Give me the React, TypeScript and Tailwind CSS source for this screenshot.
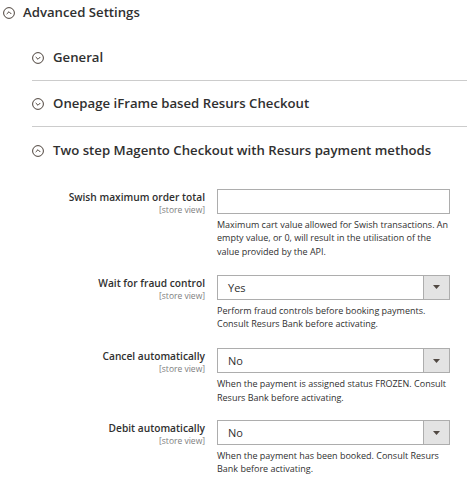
import React from "react";

function CircleChevron({ up, size = 12 }: { up?: boolean; size?: number }) {
  return (
    <svg width={size} height={size} viewBox="0 0 14 14" className="shrink-0">
      <circle cx="7" cy="7" r="6.3" fill="none" stroke="#41362f" strokeWidth="1.1" />
      {up ? (
        <path d="M4.3 8.2 L7 5.5 L9.7 8.2" fill="none" stroke="#41362f" strokeWidth="1.1" />
      ) : (
        <path d="M4.3 5.8 L7 8.5 L9.7 5.8" fill="none" stroke="#41362f" strokeWidth="1.1" />
      )}
    </svg>
  );
}

function Label({ text }: { text: string }) {
  return (
    <div className="w-[174px] shrink-0 pt-[1px] pr-[1px] text-right">
      <div className="text-[10.2px] leading-[14px] font-semibold text-[#303030]">{text}</div>
      <div className="text-[8.5px] leading-[11px] text-[#808080]">[store view]</div>
    </div>
  );
}

function Select({ value }: { value: string }) {
  return (
    <div className="flex h-[25px] w-[233px] border border-[#adadad] bg-white">
      <div className="flex-1 pl-[10px] text-[11px] leading-[23px] text-[#303030]">{value}</div>
      <div className="flex w-[26px] items-center justify-center border-l border-[#adadad] bg-[#e3e3e3]">
        <svg width="7" height="4" viewBox="0 0 7 4">
          <path d="M0 0 L7 0 L3.5 4 Z" fill="#514943" />
        </svg>
      </div>
    </div>
  );
}

function Help({ children }: { children: React.ReactNode }) {
  return (
    <div className="mt-[4px] w-[233px] text-[9px] leading-[13.3px] text-[#303030]">{children}</div>
  );
}

export default function App() {
  return (
    <div
      className="h-[488px] w-[467px] overflow-hidden bg-white text-[#303030]"
      style={{ fontFamily: '"Open Sans", sans-serif' }}
    >
      <div className="flex h-[25px] items-center gap-[8px] pl-[3px]">
        <CircleChevron up />
        <span className="text-[13.2px] font-semibold">Advanced Settings</span>
      </div>
      <div className="mt-[10px] pl-[32px]">
        <div className="flex h-[46px] items-center gap-[9px] border-b border-[#cccccc]">
          <CircleChevron />
          <span className="text-[13.2px] font-semibold">General</span>
        </div>
        <div className="flex h-[46px] items-center gap-[9px] border-b border-[#cccccc]">
          <CircleChevron />
          <span className="text-[13.2px] font-semibold">Onepage iFrame based Resurs Checkout</span>
        </div>
        <div className="flex h-[48px] items-center gap-[9px]">
          <CircleChevron up />
          <span className="text-[13.2px] font-semibold">
            Two step Magento Checkout with Resurs payment methods
          </span>
        </div>

        <div className="mt-[14px] flex flex-col">
          <div className="flex gap-[11px]">
            <Label text="Swish maximum order total" />
            <div>
              <div className="h-[25px] w-[233px] border border-[#adadad] bg-white" />
              <Help>
                Maximum cart value allowed for Swish transactions. An empty value, or 0, will
                result in the utilisation of the value provided by the API.
              </Help>
            </div>
          </div>
          <div className="mt-[17px] flex gap-[11px]">
            <Label text="Wait for fraud control" />
            <div>
              <Select value="Yes" />
              <Help>
                Perform fraud controls before booking payments. Consult Resurs Bank before
                activating.
              </Help>
            </div>
          </div>
          <div className="mt-[18px] flex gap-[11px]">
            <Label text="Cancel automatically" />
            <div>
              <Select value="No" />
              <Help>
                When the payment is assigned status FROZEN. Consult Resurs Bank before
                activating.
              </Help>
            </div>
          </div>
          <div className="mt-[16px] flex gap-[11px]">
            <Label text="Debit automatically" />
            <div>
              <Select value="No" />
              <Help>
                When the payment has been booked. Consult Resurs Bank before activating.
              </Help>
            </div>
          </div>
        </div>
      </div>
    </div>
  );
}
